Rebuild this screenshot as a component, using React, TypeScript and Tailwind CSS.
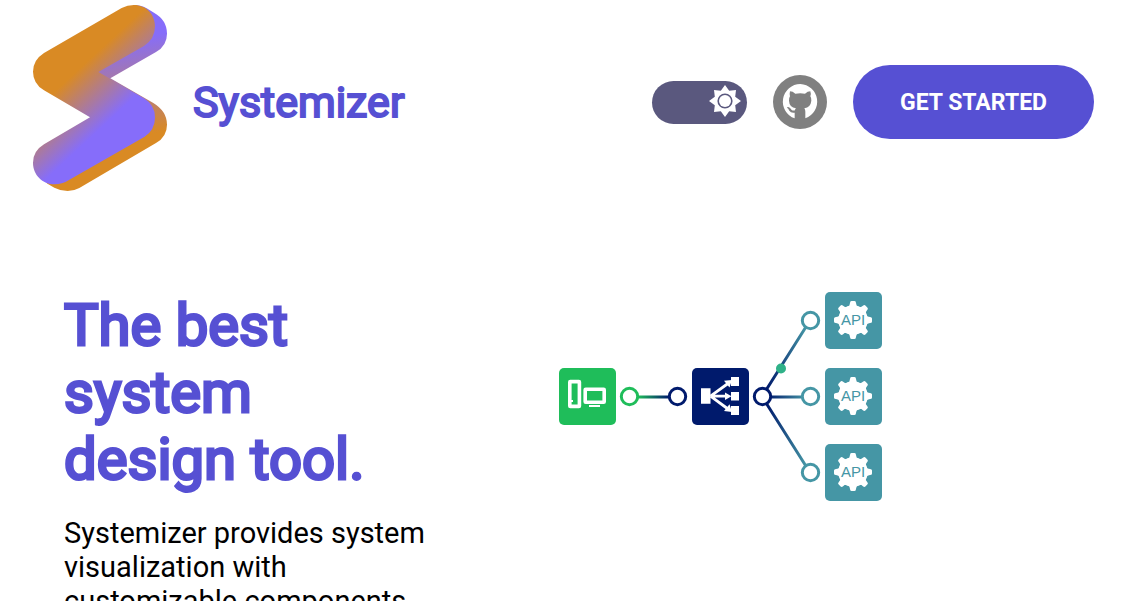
function Logo() {
  return (
    <svg viewBox="0 0 480 600" className="h-50 w-40 shrink-0" role="img" aria-label="Systemizer logo">
      <defs>
        <linearGradient id="front" gradientUnits="userSpaceOnUse" x1="150" y1="232" x2="269" y2="360">
          <stop offset="0" stopColor="#d98a24" />
          <stop offset="1" stopColor="#866dfa" />
        </linearGradient>
        <linearGradient id="back" gradientUnits="userSpaceOnUse" x1="370" y1="110" x2="425" y2="395">
          <stop offset="0" stopColor="#866dfa" />
          <stop offset="1" stopColor="#d98a24" />
        </linearGradient>
      </defs>
      <path
        fill="url(#back)"
        d="M340 15Q362 15 380 25L402 38Q441 60 441 101Q441 137 408 156L271 235L400 309Q441 334 441 374Q441 410 408 429L178 564Q162 573 143 573Q122 573 103 563L80 550L300 400L200 220Z"
      />
      <path
        fill="url(#front)"
        d="M305 24Q322 15 342 15C379 15 405 43 405 79Q405 117 372 138L235 216L372 295Q405 315 405 353Q405 389 374 410L147 540Q126 553 104 553C67 553 39 524 39 488Q39 453 72 433L210 352L72 271Q39 251 39 215Q39 180 72 159Z"
      />
    </svg>
  );
}

function SunIcon() {
  return (
    <svg viewBox="-16 -16 32 32" className="size-8" fill="#fff" aria-hidden="true">
      <path
        fillRule="evenodd"
        d="M0-16L4.2-10.2L11-11L10.2-4.2L16 0L10.2 4.2L11 11L4.2 10.2L0 16L-4.2 10.2L-11 11L-10.2 4.2L-16 0L-10.2-4.2L-11-11L-4.2-10.2ZM0-7.6A7.6 7.6 0 1 0 0 7.6A7.6 7.6 0 1 0 0-7.6Z"
      />
      <circle r="6" />
    </svg>
  );
}

function GitHubIcon() {
  return (
    <svg viewBox="0 0 180 180" className="size-15 shrink-0" aria-hidden="true">
      <path
        fill="#fff"
        d="M91 36A53 53 0 0 0 74 139V122Q63 124 58 116Q55 109 51 107Q52 104 57 106Q62 110 65 114Q69 117 75 115Q75 111 78 109Q58 106 57 86Q56 79 60 73Q58 66 60 58Q68 58 76 65Q91 62 105 65Q113 58 121 58Q124 66 121 73Q125 79 124 86Q122 106 103 109Q106 113 106 119V139A53 53 0 0 0 91 36Z"
      />
    </svg>
  );
}

function ApiNode({ y }: { y: number }) {
  return (
    <g transform={`translate(266 ${y})`}>
      <rect width="57" height="57" rx="5" fill="#4596a5" />
      <g transform="translate(28 28)" fill="#fff">
        <circle r="14.8" />
        {[0, 45, 90, 135, 180, 225, 270, 315].map((angle) => (
          <path key={angle} transform={`rotate(${angle})`} d="M-5.5-13Q-3-14-3-17Q-3-19-1.5-19H1.5Q3-19 3-17Q3-14 5.5-13Z" />
        ))}
      </g>
      <text x="28" y="33" textAnchor="middle" fill="#4596a5" className="font-['Liberation_Sans',sans-serif] text-[15px]">
        API
      </text>
    </g>
  );
}

function Port({ x, y, color }: { x: number; y: number; color: string }) {
  return <circle cx={x} cy={y} r="8.2" fill="#fff" stroke={color} strokeWidth="3" />;
}

function Diagram() {
  return (
    <svg viewBox="0 0 323 209" className="w-[323px] shrink-0" role="img" aria-label="Client connected to a load balancer and three APIs">
      <defs>
        <linearGradient id="wire-client" gradientUnits="userSpaceOnUse" x1="79" y1="0" x2="110" y2="0">
          <stop offset="0" stopColor="#1fbd5a" />
          <stop offset="1" stopColor="#001a6c" />
        </linearGradient>
        <linearGradient id="wire-api" gradientUnits="userSpaceOnUse" x1="208" y1="0" x2="247" y2="0">
          <stop offset="0" stopColor="#001a6c" />
          <stop offset="1" stopColor="#4596a5" />
        </linearGradient>
      </defs>
      <g strokeWidth="3" fill="none">
        <path d="M78 105L111 104.9" stroke="url(#wire-client)" />
        <path d="M203 104.5L251 28.5M203 104.9L251 105M203 104.5L251 180.5" stroke="url(#wire-api)" />
      </g>
      <circle cx="222" cy="76.5" r="5" fill="#2fb188" />
      <Port x={70.5} y={104.5} color="#1fbd5a" />
      <Port x={118.5} y={104.5} color="#001a6c" />
      <Port x={203.5} y={104.5} color="#001a6c" />
      <Port x={251.5} y={28.5} color="#4596a5" />
      <Port x={251.5} y={104.5} color="#4596a5" />
      <Port x={251.5} y={180.5} color="#4596a5" />

      <g transform="translate(0 76)">
        <rect width="57" height="57" rx="5" fill="#1fbd5a" />
        <g fill="none" stroke="#fff" strokeWidth="3.6">
          <rect x="10.8" y="13.6" width="9.6" height="24.8" rx="0.5" />
          <rect x="26.2" y="21.3" width="19" height="13" rx="0.5" />
        </g>
        <path d="M30 37H41V39H30ZM12 32H14V34H12Z" fill="#fff" />
      </g>

      <g transform="translate(133 76)">
        <rect width="57" height="57" rx="5" fill="#001a6c" />
        <g fill="#fff">
          <path d="M9 20.3H18.5V35.7H9ZM39 9H47V18H39ZM39 24H47V32.5H39ZM39 38H47V47H39Z" />
          <path d="M40 12L37.5 19.5L32 12.8ZM39.5 28.2L33 32V24.4ZM40 44L32 43L37.5 36.3Z" />
        </g>
        <path d="M18.5 28.2L36 15.5M18.5 28.2H36M18.5 28.2L36 41" stroke="#fff" strokeWidth="2.8" />
      </g>

      <ApiNode y={0} />
      <ApiNode y={76} />
      <ApiNode y={152} />
    </svg>
  );
}

export default function App() {
  return (
    <div className="min-h-screen bg-white font-[Roboto,sans-serif] text-black">
      <header className="flex h-51 items-center justify-between pr-[30px] pl-5">
        <a href="#" className="flex items-center gap-[13px] self-start text-[#5650d3]">
          <Logo />
          <span className="pt-1 text-[43px] leading-none [-webkit-text-stroke:2px_currentColor]">Systemizer</span>
        </a>
        <nav className="flex items-center gap-[26px]">
          <button
            type="button"
            aria-label="Toggle light theme"
            className="flex h-[43px] w-[95px] items-center justify-end rounded-full bg-[#5a587e] pr-[6px] pb-[3px]"
          >
            <SunIcon />
          </button>
          <a
            href="#github"
            aria-label="GitHub"
            className="flex size-[54px] items-center justify-center rounded-full bg-[#808080]"
          >
            <GitHubIcon />
          </a>
          <button
            type="button"
            className="h-[74px] w-[241px] rounded-full bg-[#5650d3] pt-0.5 text-[23px] font-bold text-white"
          >
            GET STARTED
          </button>
        </nav>
      </header>
      <main className="flex items-start pt-[88px] pr-[70px] pl-16">
        <section className="w-1/2 pr-32">
          <h1 className="text-[58px] leading-[67px] text-[#5650d3] [-webkit-text-stroke:3px_currentColor]">
            The best system design tool.
          </h1>
          <p className="mt-[23px] text-[29px] leading-[34px]">
            Systemizer provides system visualization with customizable components
          </p>
        </section>
        <Diagram />
      </main>
    </div>
  );
}
